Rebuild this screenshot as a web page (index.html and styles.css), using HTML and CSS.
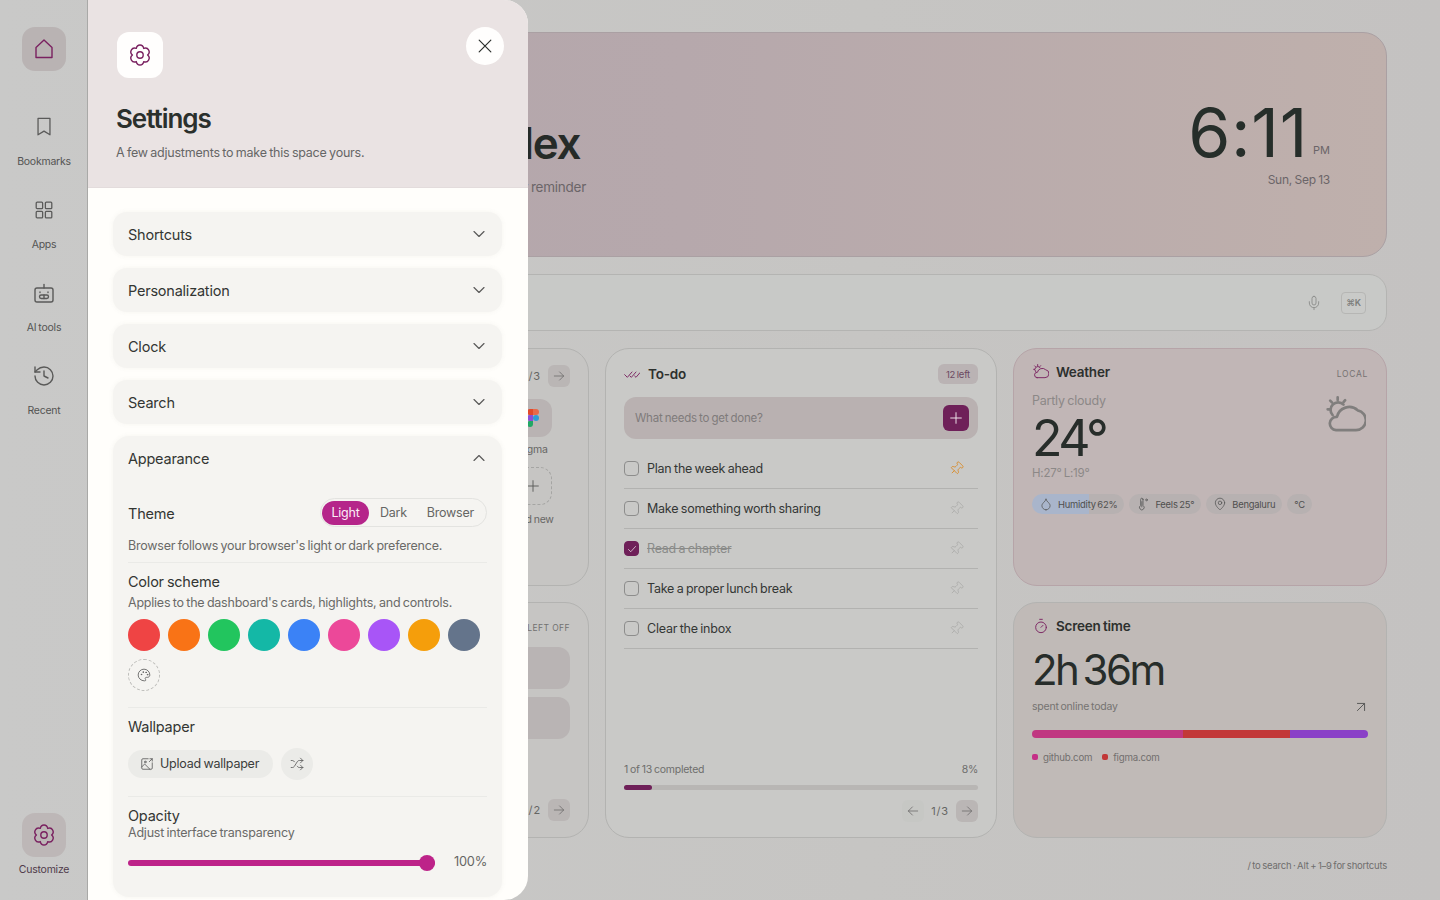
FILE: index.html
```html
<!DOCTYPE html>
<html lang="en">
<head>
<meta charset="utf-8">
<title>Dashboard settings</title>
<link rel="stylesheet" href="styles.css">
</head>
<body>
<svg class="defs" aria-hidden="true">
  <symbol id="i-home" viewBox="0 0 24 24"><path d="M4 20.500V10.500L12 3l8 7.500v10z"/></symbol>
  <symbol id="i-gear" viewBox="0 0 24 24"><circle cx="12" cy="12" r="3.200"/><path d="M19.600 12c1.900-1.600 1.900-3.600 1-5.100-.9-1.600-2.800-2.400-4.900-1.500C15.300 3.300 13.800 2 12 2S8.700 3.300 8.300 5.400C6.200 4.500 4.300 5.300 3.400 6.900c-.9 1.500-.9 3.500 1 5.100-1.900 1.600-1.900 3.600-1 5.100.9 1.600 2.800 2.400 4.900 1.500.4 2.100 1.900 3.400 3.700 3.400s3.300-1.300 3.700-3.400c2.100.9 4 .1 4.900-1.500.9-1.500.9-3.500-1-5.100z"/></symbol>
  <symbol id="i-bookmark" viewBox="0 0 24 24"><path d="m18.500 20.500-6.500-4-6.500 4V2.500h13z"/></symbol>
  <symbol id="i-grid" viewBox="0 0 24 24"><rect x="3.500" y="3.500" width="7" height="7" rx="1"/><rect x="13.500" y="3.500" width="7" height="7" rx="1"/><rect x="3.500" y="13.500" width="7" height="7" rx="1"/><rect x="13.500" y="13.500" width="7" height="7" rx="1"/></symbol>
  <symbol id="i-bot" viewBox="0 0 24 24"><path d="M12 7V3.500"/><rect x="3" y="7" width="18" height="14" rx="2"/><rect x="7.500" y="14" width="9" height="3.500" rx="1.750"/><path d="M8 11v.5M16 11v.5M12 14v3.500"/></symbol>
  <symbol id="i-history" viewBox="0 0 24 24"><path d="M3 12a9 9 0 1 0 9-9 9.750 9.750 0 0 0-6.740 2.740L3 8"/><path d="M3 3v5h5"/><path d="M12 7v5l4 2"/></symbol>
  <symbol id="i-x" viewBox="0 0 24 24"><path d="M5 5l14 14M19 5 5 19"/></symbol>
  <symbol id="i-down" viewBox="0 0 24 24"><path d="m6 9 6 6 6-6"/></symbol>
  <symbol id="i-up" viewBox="0 0 24 24"><path d="m6 15 6-6 6 6"/></symbol>
  <symbol id="i-palette" viewBox="0 0 24 24"><path d="M12 22a10 10 0 1 1 10-10c0 2.200-1.800 4-4 4h-2a2 2 0 0 0-1.500 3.300c.4.5.5 1 .5 1.500 0 .7-.6 1.200-1.300 1.200z"/><circle cx="7.500" cy="11" r=".6"/><circle cx="10.500" cy="7" r=".6"/><circle cx="15.500" cy="7.500" r=".6"/><circle cx="18" cy="11.500" r=".6"/></symbol>
  <symbol id="i-image" viewBox="0 0 24 24"><path d="M14 3H5a2 2 0 0 0-2 2v14a2 2 0 0 0 2 2h14a2 2 0 0 0 2-2v-9"/><path d="m3 17 5-5 9 9"/><circle cx="9" cy="8.500" r="1.500"/><path d="m16 8 5-5M17 3h4v4"/></symbol>
  <symbol id="i-shuffle" viewBox="0 0 24 24"><path d="m18 14 4 4-4 4"/><path d="m18 2 4 4-4 4"/><path d="M2 18h2a4 4 0 0 0 3.300-1.700l5.400-8.600A4 4 0 0 1 16 6h6"/><path d="M2 6h2a4 4 0 0 1 3.600 2.200"/><path d="M22 18h-6a4 4 0 0 1-3.300-1.800l-.4-.45"/></symbol>
  <symbol id="i-pin" viewBox="0 0 24 24"><path d="M12 17v5"/><path d="M9 10.760a2 2 0 0 1-1.110 1.790l-1.780.9A2 2 0 0 0 5 15.240V16a1 1 0 0 0 1 1h12a1 1 0 0 0 1-1v-.76a2 2 0 0 0-1.110-1.790l-1.780-.9A2 2 0 0 1 15 10.760V7a1 1 0 0 1 1-1 2 2 0 0 0 0-4H8a2 2 0 0 0 0 4 1 1 0 0 1 1 1z"/></symbol>
  <symbol id="i-todo" viewBox="0 0 24 24"><path d="m1 13 4 4 7-8"/><path d="m9 15 2 2 7-8"/><path d="m16 15 2 2 6-7"/></symbol>
  <symbol id="i-cloud" viewBox="0 0 24 24"><path d="M6 20.500H18A6 6 0 0 0 19 8.600 7.500 7.500 0 0 0 6.600 12.500 4 4 0 0 0 6 20.500Z"/><path d="M10.500 5.200A4.500 4.500 0 0 0 4 11.500"/><path d="M7 .8v1.600M1 8h1.500M2.500 2.800l1.200 1.200M11.500 2.500l-1 1.200"/></symbol>
  <symbol id="i-drop" viewBox="0 0 24 24"><path d="M12 22a7 7 0 0 0 7-7c0-2-1-3.900-3-5.500s-3.500-4-4-6.500c-.5 2.500-2 4.900-4 6.500C6 11.100 5 13 5 15a7 7 0 0 0 7 7z"/></symbol>
  <symbol id="i-thermo" viewBox="0 0 24 24"><path d="M12 4v10.540a4 4 0 1 1-4 0V4a2 2 0 0 1 4 0Z"/><path d="M10 8v9"/><circle cx="18" cy="5" r="1.500"/></symbol>
  <symbol id="i-mappin" viewBox="0 0 24 24"><path d="M20 10c0 6-8 12-8 12s-8-6-8-12a8 8 0 0 1 16 0Z"/><circle cx="12" cy="10" r="3"/></symbol>
  <symbol id="i-timer" viewBox="0 0 24 24"><path d="M10 2h4"/><path d="m12 14 3-3"/><circle cx="12" cy="14" r="8"/></symbol>
  <symbol id="i-upright" viewBox="5 5 14 14"><path d="M7 7h10v10"/><path d="M7 17 17 7"/></symbol>
  <symbol id="i-mic" viewBox="0 0 24 24"><path d="M12 2a3 3 0 0 0-3 3v7a3 3 0 0 0 6 0V5a3 3 0 0 0-3-3Z"/><path d="M19 10v2a7 7 0 0 1-14 0v-2"/><path d="M12 19v3"/></symbol>
  <symbol id="i-right" viewBox="0 0 24 24"><path d="M4 12h16"/><path d="m13 5 7 7-7 7"/></symbol>
  <symbol id="i-left" viewBox="0 0 24 24"><path d="M20 12H4"/><path d="m11 5-7 7 7 7"/></symbol>
  <symbol id="i-plus" viewBox="0 0 24 24"><path d="M12 4v16M4 12h16"/></symbol>
  <symbol id="i-check" viewBox="0 0 24 24"><path d="m5 13 4.500 4.500L19 7"/></symbol>
</svg>

<div class="app">
  <nav class="side">
    <div class="nav-home"><span class="nav-box active"><svg class="ic ic24 accent"><use href="#i-home"/></svg></span></div>
    <div class="nav-item"><span class="nav-box"><svg class="ic ic22"><use href="#i-bookmark"/></svg></span><span class="nav-label">Bookmarks</span></div>
    <div class="nav-item"><span class="nav-box"><svg class="ic ic22"><use href="#i-grid"/></svg></span><span class="nav-label">Apps</span></div>
    <div class="nav-item"><span class="nav-box"><svg class="ic ic24"><use href="#i-bot"/></svg></span><span class="nav-label">AI tools</span></div>
    <div class="nav-item"><span class="nav-box"><svg class="ic ic24"><use href="#i-history"/></svg></span><span class="nav-label">Recent</span></div>
    <div class="nav-item nav-bottom"><span class="nav-box active"><svg class="ic ic24 accent"><use href="#i-gear"/></svg></span><span class="nav-label accent-label">Customize</span></div>
  </nav>

  <main class="main">
    <section class="hero">
      <div class="hero-left">
        <h1 class="greet">Hi, Alex</h1>
        <p class="hero-sub">No events today, so add a calendar reminder</p>
      </div>
      <div class="clock">
        <div class="clock-line"><span class="clock-time">6:11</span><span class="clock-pm">PM</span></div>
        <div class="clock-date">Sun, Sep 13</div>
      </div>
    </section>

    <section class="search">
      <svg class="ic ic16 faint"><use href="#i-mic"/></svg>
      <span class="kbd">⌘K</span>
    </section>

    <section class="grid">
      <article class="card card-apps">
        <div class="pager-top"><span class="pager-num">1/3</span><span class="pg-btn"><svg class="ic ic14"><use href="#i-right"/></svg></span></div>
        <div class="tile-col">
          <span class="tile">
            <svg class="figma" viewBox="0 0 12 18"><path fill="#e2492b" d="M3 0h3v6H3a3 3 0 0 1 0-6z"/><path fill="#e8694a" d="M6 0h3a3 3 0 0 1 0 6H6z"/><path fill="#8a4fd8" d="M3 6h3v6H3a3 3 0 0 1 0-6z"/><circle fill="#2f9bd6" cx="9" cy="9" r="3"/><path fill="#21a865" d="M3 12h3v3a3 3 0 1 1-3-3z"/></svg>
          </span>
          <span class="tile-label">Figma</span>
          <span class="tile tile-add"><svg class="ic ic16"><use href="#i-plus"/></svg></span>
          <span class="tile-label">Add new</span>
        </div>
      </article>

      <article class="card card-todo">
        <header class="todo-head">
          <svg class="ic ic16 accent"><use href="#i-todo"/></svg>
          <h2 class="card-title">To-do</h2>
          <span class="left-badge">12 left</span>
        </header>
        <div class="todo-input">
          <span class="placeholder">What needs to get done?</span>
          <span class="add-btn"><svg class="ic ic16 white"><use href="#i-plus"/></svg></span>
        </div>
        <ul class="todo-list">
          <li class="todo-row"><span class="cb"></span><span class="todo-text">Plan the week ahead</span><svg class="ic pin pin-on"><use href="#i-pin"/></svg></li>
          <li class="todo-row"><span class="cb"></span><span class="todo-text">Make something worth sharing</span><svg class="ic pin"><use href="#i-pin"/></svg></li>
          <li class="todo-row"><span class="cb cb-on"><svg class="ic ic12 white"><use href="#i-check"/></svg></span><span class="todo-text done">Read a chapter</span><svg class="ic pin"><use href="#i-pin"/></svg></li>
          <li class="todo-row"><span class="cb"></span><span class="todo-text">Take a proper lunch break</span><svg class="ic pin"><use href="#i-pin"/></svg></li>
          <li class="todo-row"><span class="cb"></span><span class="todo-text">Clear the inbox</span><svg class="ic pin"><use href="#i-pin"/></svg></li>
        </ul>
        <div class="todo-foot">
          <div class="todo-stats"><span>1 of 13 completed</span><span>8%</span></div>
          <div class="todo-bar"><span class="todo-fill"></span></div>
          <div class="todo-pager">
            <span class="pg-btn pg-off"><svg class="ic ic14"><use href="#i-left"/></svg></span>
            <span class="pager-num">1/3</span>
            <span class="pg-btn"><svg class="ic ic14"><use href="#i-right"/></svg></span>
          </div>
        </div>
      </article>

      <article class="card card-weather">
        <header class="w-head">
          <svg class="ic ic16 accent"><use href="#i-cloud"/></svg>
          <h2 class="card-title">Weather</h2>
          <span class="local">LOCAL</span>
        </header>
        <div class="w-body">
          <div class="w-main">
            <div class="w-cond">Partly cloudy</div>
            <div class="w-temp">24°</div>
            <div class="w-hl">H:27° L:19°</div>
          </div>
          <svg class="ic w-big"><use href="#i-cloud"/></svg>
        </div>
        <div class="chips">
          <span class="chip chip-hum"><svg class="ic ic14"><use href="#i-drop"/></svg>Humidity 62%</span>
          <span class="chip"><svg class="ic ic14"><use href="#i-thermo"/></svg>Feels 25°</span>
          <span class="chip"><svg class="ic ic14"><use href="#i-mappin"/></svg>Bengaluru</span>
          <span class="chip chip-unit">°C</span>
        </div>
      </article>

      <article class="card card-left">
        <div class="left-head">LEFT OFF</div>
        <div class="left-tile"></div>
        <div class="left-tile"></div>
        <div class="pager-bottom"><span class="pager-num">1/2</span><span class="pg-btn"><svg class="ic ic14"><use href="#i-right"/></svg></span></div>
      </article>

      <article class="card card-screen">
        <header class="w-head">
          <svg class="ic ic16 accent"><use href="#i-timer"/></svg>
          <h2 class="card-title">Screen time</h2>
        </header>
        <div class="st-value">2h 36m</div>
        <div class="st-sub"><span>spent online today</span><svg class="ic ic10"><use href="#i-upright"/></svg></div>
        <div class="st-bar"><span class="seg seg-a"></span><span class="seg seg-b"></span><span class="seg seg-c"></span></div>
        <div class="legend">
          <span class="leg"><i class="dot dot-a"></i>github.com</span>
          <span class="leg"><i class="dot dot-b"></i>figma.com</span>
        </div>
      </article>
    </section>

    <footer class="hint">/ to search · Alt + 1–9 for shortcuts</footer>
  </main>
</div>

<aside class="drawer">
  <header class="d-head">
    <span class="d-logo"><svg class="ic ic24 accent"><use href="#i-gear"/></svg></span>
    <h2 class="d-title">Settings</h2>
    <p class="d-sub">A few adjustments to make this space yours.</p>
    <button class="d-close" type="button" aria-label="Close"><svg class="ic ic20 dark"><use href="#i-x"/></svg></button>
  </header>
  <div class="d-body">
    <div class="acc"><span>Shortcuts</span><svg class="ic ic20"><use href="#i-down"/></svg></div>
    <div class="acc"><span>Personalization</span><svg class="ic ic20"><use href="#i-down"/></svg></div>
    <div class="acc"><span>Clock</span><svg class="ic ic20"><use href="#i-down"/></svg></div>
    <div class="acc"><span>Search</span><svg class="ic ic20"><use href="#i-down"/></svg></div>
    <div class="acc-open">
      <div class="acc acc-flat"><span>Appearance</span><svg class="ic ic20"><use href="#i-up"/></svg></div>
      <div class="theme-row">
        <span class="set-title theme-title">Theme</span>
        <div class="seg-ctl"><span class="seg-opt seg-on">Light</span><span class="seg-opt">Dark</span><span class="seg-opt">Browser</span></div>
      </div>
      <p class="set-note">Browser follows your browser's light or dark preference.</p>
      <div class="set-block set-color">
        <div class="set-title">Color scheme</div>
        <p class="set-desc">Applies to the dashboard's cards, highlights, and controls.</p>
        <div class="swatches">
          <span class="sw s1"></span><span class="sw s2"></span><span class="sw s3"></span><span class="sw s4"></span><span class="sw s5"></span><span class="sw s6"></span><span class="sw s7"></span><span class="sw s8"></span><span class="sw s9"></span>
          <span class="sw sw-custom"><svg class="ic ic14"><use href="#i-palette"/></svg></span>
        </div>
      </div>
      <div class="set-block set-wall">
        <div class="set-title">Wallpaper</div>
        <div class="wall-row">
          <span class="upload"><svg class="ic ic14"><use href="#i-image"/></svg><span>Upload wallpaper</span></span>
          <span class="shuffle"><svg class="ic ic14"><use href="#i-shuffle"/></svg></span>
        </div>
      </div>
      <div class="set-block set-op">
        <div class="set-title">Opacity</div>
        <p class="set-desc">Adjust interface transparency</p>
        <div class="slider-row">
          <div class="slider"><span class="thumb"></span></div>
          <span class="slider-val">100%</span>
        </div>
      </div>
    </div>
  </div>
</aside>
</body>
</html>
```

FILE: styles.css
```css
* { box-sizing: border-box; }
html, body { margin: 0; height: 100%; }
body {
  width: 1440px; height: 900px; overflow: hidden; position: relative;
  font-family: Inter, "Liberation Sans", sans-serif;
  color: #2a2e2b;
  background: linear-gradient(90deg, #c9c9c8 0%, #c6c5c3 60%, #c4c2c1 100%);
  letter-spacing: -0.014em;
  word-spacing: -0.05em;
}
h1, h2, p, ul { margin: 0; padding: 0; }
ul { list-style: none; }
.defs { position: absolute; width: 0; height: 0; }
.ic { fill: none; stroke: #5a5a59; stroke-width: 1.400; stroke-linecap: round; stroke-linejoin: round; flex: none; display: block; }
.ic10 { width: 10px; height: 10px; }
.ic12 { width: 12px; height: 12px; }
.ic14 { width: 14px; height: 14px; }
.ic16 { width: 16px; height: 16px; }
.ic20 { width: 20px; height: 20px; }
.ic22 { width: 22px; height: 22px; }
.ic24 { width: 24px; height: 24px; }
.accent { stroke: #7a2160; }
.white { stroke: #f4ecf1; }
.dark { stroke: #2a2e2b; }
.faint { stroke: #8d8e8c; }

.app { display: flex; height: 900px; }
.side { width: 88px; flex: none; display: flex; flex-direction: column; align-items: center; padding: 27px 0 22px; gap: 18px; }
.nav-home { margin-bottom: 16px; }
.nav-item { display: flex; flex-direction: column; align-items: center; gap: 5px; }
.nav-bottom { margin-top: auto; }
.nav-box { width: 44px; height: 44px; border-radius: 13px; display: flex; align-items: center; justify-content: center; }
.nav-box.active { background: #b9b3b3; }
.nav-bottom .nav-box.active { background: #bdb7b7; }
.nav-label { font-size: 10.500px; line-height: 16px; color: #545453; }
.accent-label { color: #4f3a4a; }

.main { flex: 1; min-width: 0; padding: 32px 53px 0 127px; display: flex; flex-direction: column; }
.hero {
  height: 225px; border-radius: 24px; border: 1px solid #aaa0a3;
  background: linear-gradient(90deg, #b3a6ab 0%, #b6a8ac 40%, #bfb0ac 100%);
  display: flex; justify-content: space-between; padding: 0 56px 0 100px;
}
.hero-left { padding-top: 83px; text-align: right; }
.greet { font-size: 44px; font-weight: 600; line-height: 54px; letter-spacing: -0.03em; word-spacing: 0; white-space: nowrap; color: #262b28; padding-right: 6px; }
.hero-sub { font-size: 13.500px; line-height: 20px; margin-top: 7px; color: #6b6568; white-space: nowrap; }
.clock { display: flex; flex-direction: column; align-items: flex-end; padding-top: 59px; }
.clock-line { display: flex; align-items: flex-end; gap: 5px; }
.clock-time { font-size: 68px; line-height: 80px; font-weight: 400; color: #262e2a; letter-spacing: .01em; }
.clock-pm { font-size: 11px; line-height: 16px; margin-bottom: 14px; color: #6b6568; letter-spacing: 0; }
.clock-date { font-size: 12px; line-height: 16px; margin-top: 0; color: #6b6568; }

.search {
  height: 57px; margin-top: 17px; border-radius: 18px; border: 1px solid #b4b4b2;
  background: #c8c9c7; display: flex; align-items: center; justify-content: flex-end; gap: 19px; padding: 0 20px;
}
.kbd { width: 25px; height: 22px; border: 1px solid #b6b6b4; border-radius: 4px; font-size: 9px; font-weight: 600; color: #7d7e7c; display: flex; align-items: center; justify-content: center; background: #c9cac8; }

.grid { margin-top: 17px; display: grid; grid-template-columns: 374px 392px 374px; grid-template-rows: 238px 236px; gap: 16px; }
.card { border-radius: 24px; border: 1px solid #b3b3b1; min-width: 0; }
.card-apps { grid-column: 1; grid-row: 1; background: #c6c5c3; padding: 16px 18px; }
.card-todo { grid-column: 2; grid-row: 1 / span 2; background: #c9c9c7; padding: 14px 18px 15px; display: flex; flex-direction: column; }
.card-weather { grid-column: 3; grid-row: 1; background: #c1b6b6; border-color: #b6a4a8; padding: 13px 18px; }
.card-left { grid-column: 1; grid-row: 2; background: #c6c5c3; padding: 17px 18px 16px; display: flex; flex-direction: column; gap: 8px; }
.card-screen { grid-column: 3; grid-row: 2; background: #c0bab7; padding: 13px 18px; }

.pg-btn { width: 22px; height: 22px; border-radius: 6px; background: #bab6b5; display: flex; align-items: center; justify-content: center; }
.pg-off { background: #c6c7c4; }
.pg-off .ic { stroke: #a9aaa8; }
.pg-btn .ic { stroke: #6e6c6c; }
.pager-num { font-size: 11px; color: #656563; letter-spacing: .08em; }
.pager-top, .pager-bottom { display: flex; justify-content: flex-end; align-items: center; gap: 7px; }
.pager-bottom { margin-top: auto; }
.tile-col { width: 38px; margin: 12px 0 0 280px; display: flex; flex-direction: column; align-items: center; }
.tile { width: 38px; height: 38px; flex: none; border-radius: 12px; background: #b9b3b3; display: flex; align-items: center; justify-content: center; }
.tile-add { background: none; border: 1px dashed #a5a5a3; margin-top: 9px; }
.figma { width: 12px; height: 18px; display: block; }
.tile-label { font-size: 10.500px; line-height: 16px; margin-top: 5px; color: #666664; white-space: nowrap; }
.tile-add + .tile-label { margin-top: 7px; }
.left-head { text-align: right; font-size: 8.500px; line-height: 16px; letter-spacing: .05em; word-spacing: 0; color: #717170; margin-bottom: 3px; }
.left-tile { height: 42px; border-radius: 12px; background: #b9b4b4; flex: none; }

.todo-head { display: flex; align-items: center; height: 22px; gap: 8px; }
.card-title { font-size: 13.500px; font-weight: 600; line-height: 20px; color: #2d302e; }
.left-badge { margin-left: auto; height: 20px; padding: 0 8px; border-radius: 6px; background: #bab3b4; color: #6c4a62; font-size: 9.500px; display: flex; align-items: center; }
.todo-input { margin-top: 12px; height: 42px; flex: none; border-radius: 12px; background: #b9b1b1; display: flex; align-items: center; justify-content: space-between; padding: 0 9px 0 11px; }
.placeholder { font-size: 11.500px; color: #7f7b7b; }
.add-btn { width: 26px; height: 26px; border-radius: 6px; background: #6f2059; display: flex; align-items: center; justify-content: center; }
.todo-list { margin-top: 10px; }
.todo-row { height: 40px; border-bottom: 1px solid #b2b2b0; display: flex; align-items: center; }
.cb { width: 15px; height: 15px; border-radius: 4px; border: 1px solid #8d8d8c; flex: none; display: flex; align-items: center; justify-content: center; }
.cb-on { background: #6f2059; border-color: #6f2059; }
.todo-text { font-size: 12.500px; margin-left: 8px; color: #343735; flex: 1; white-space: nowrap; }
.done { text-decoration: line-through; color: #8a8b89; }
.pin { width: 15px; height: 15px; transform: rotate(45deg); margin-right: 14px; stroke: #aeaeac; }
.pin-on { stroke: #d98d2c; }
.todo-foot { margin-top: auto; }
.todo-stats { display: flex; justify-content: space-between; font-size: 10.500px; line-height: 14px; color: #6e6e6c; }
.todo-bar { height: 5px; border-radius: 3px; background: #b8b6b4; margin-top: 8px; }
.todo-fill { display: block; width: 28px; height: 5px; border-radius: 3px; background: #6f2059; }
.todo-pager { display: flex; justify-content: flex-end; align-items: center; gap: 7px; margin-top: 10px; }

.w-head { display: flex; align-items: center; height: 20px; gap: 7px; padding: 0 0 0 1px; }
.local { margin-left: auto; padding-top: 3px; font-size: 8.500px; letter-spacing: .08em; color: #767272; }
.w-body { display: flex; justify-content: space-between; }
.w-cond { font-size: 12.500px; line-height: 18px; margin-top: 10px; color: #8c8887; }
.w-temp { font-size: 50px; line-height: 54px; margin-top: 1px; color: #272d2a; font-weight: 400; letter-spacing: -0.07em; }
.w-hl { font-size: 11.500px; line-height: 16px; color: #8c8887; }
.w-big { width: 40px; height: 40px; margin: 14px 2px 0 0; stroke: #807e7d; stroke-width: 1.600; }
.chips { display: flex; gap: 5px; margin-top: 13px; }
.chip { height: 20px; border-radius: 10px; background: #b7b1b1; font-size: 9.400px; color: #4f4f4e; display: flex; align-items: center; gap: 5px; padding: 0 7px; white-space: nowrap; }
.chip-hum { background: linear-gradient(90deg, #a9b5cb 0 62%, #b7b1b1 62%); }
.chip-unit { padding: 0 7px; }

.st-value { font-size: 42px; line-height: 52px; margin-top: 8px; color: #272d2a; font-weight: 400; letter-spacing: -0.06em; word-spacing: -0.1em; }
.st-sub { display: flex; justify-content: space-between; align-items: center; font-size: 10.500px; line-height: 14px; margin-top: 4px; color: #757371; padding-right: 2px; }
.st-bar { display: flex; height: 8px; border-radius: 4px; overflow: hidden; margin-top: 16px; }
.seg { display: block; height: 8px; }
.seg-a { width: 151px; background: #c03781; }
.seg-b { width: 107px; background: #c23838; }
.seg-c { flex: 1; background: #8a40c7; }
.legend { display: flex; gap: 10px; margin-top: 14px; }
.leg { display: flex; align-items: center; gap: 5px; font-size: 9.700px; color: #726f6e; }
.dot { width: 6px; height: 6px; border-radius: 2px; display: block; margin-top: -2px; }
.dot-a { background: #c52f87; }
.dot-b { background: #c23838; }
.hint { text-align: right; font-size: 9.500px; line-height: 14px; margin-top: 21px; color: #6f6e6d; }

/* settings drawer, over the dashboard */
.drawer {
  position: absolute; left: 88px; top: 0; width: 440px; height: 900px; overflow: hidden;
  background: #fffefb; border-radius: 0 24px 24px 0; box-shadow: -1px 0 0 #a9a9a7;
}
.d-head { position: relative; height: 188px; background: #eae3e3; border-bottom: 1px solid #e3dcdc; padding: 32px 28px 0; }
.d-logo { width: 46px; height: 46px; margin-left: 1px; border-radius: 12px; background: #fffefd; display: flex; align-items: center; justify-content: center; }
.d-title { font-size: 26px; font-weight: 600; line-height: 32px; margin-top: 25px; letter-spacing: -0.04em; word-spacing: 0; color: #2b302d; }
.d-sub { font-size: 12.500px; line-height: 18px; margin-top: 9px; color: #666; }
.d-close { position: absolute; right: 24px; top: 27px; width: 38px; height: 38px; border: 0; border-radius: 50%; background: #fffefd; padding: 0; display: flex; align-items: center; justify-content: center; }
.d-body { padding: 24px 26px 0 25px; display: flex; flex-direction: column; gap: 12px; }
.acc { height: 44px; border-radius: 14px; background: #f5f4f1; box-shadow: 0 0 5px rgba(110,110,100,.07); display: flex; align-items: center; justify-content: space-between; padding: 0 13px 0 15px; font-size: 14.500px; color: #333633; flex: none; }
.acc-flat { box-shadow: none; background: none; }
.acc-open { border-radius: 16px; background: #f5f4f1; box-shadow: 0 0 5px rgba(110,110,100,.07); padding-bottom: 24px; }
.theme-row { display: flex; align-items: center; justify-content: space-between; padding: 18px 15px 0; }
.theme-title { padding-top: 2px; }
.set-title { font-size: 14.500px; line-height: 20px; color: #333633; }
.seg-ctl { height: 29px; width: 167px; border: 1px solid #e3e3e0; border-radius: 15px; display: flex; align-items: center; padding: 0 2px 0 1px; }
.seg-opt { font-size: 12.500px; color: #666664; line-height: 24px; padding: 0 10px; }
.seg-on { width: 48px; padding: 0; margin-right: 1px; text-align: center; height: 24px; border-radius: 12px; background: #b5258a; color: #fbeef6; }
.set-note { font-size: 12.500px; line-height: 18px; margin: 10px 15px 0; color: #6a6a68; padding-bottom: 7px; border-bottom: 1px solid #eaeae7; }
.set-desc { font-size: 12.500px; line-height: 18px; color: #6a6a68; }
.set-block { margin: 0 15px; }
.set-color { padding-top: 9px; }
.set-color .set-desc { margin-top: 2px; }
.swatches { display: flex; flex-wrap: wrap; gap: 8px; margin-top: 7px; padding-bottom: 16px; border-bottom: 1px solid #eaeae7; }
.sw { width: 32px; height: 32px; border-radius: 50%; display: flex; align-items: center; justify-content: center; flex: none; }
.s1 { background: #ef4444; } .s2 { background: #f97316; } .s3 { background: #22c55e; }
.s4 { background: #14b8a6; } .s5 { background: #3b82f6; } .s6 { background: #ec4899; }
.s7 { background: #a855f7; } .s8 { background: #f59e0b; } .s9 { background: #64748b; }
.sw-custom { border: 1px dashed #bdbdba; }
.set-wall { padding-top: 9px; padding-bottom: 16px; border-bottom: 1px solid #eaeae7; }
.wall-row { display: flex; align-items: center; gap: 8px; margin-top: 11px; }
.upload { height: 28px; width: 145px; border-radius: 14px; background: #ebebe8; display: flex; align-items: center; gap: 6px; padding: 0 12px 1px; font-size: 12.500px; color: #3b3d3b; white-space: nowrap; }
.shuffle { width: 32px; height: 32px; border-radius: 50%; background: #ebebe8; display: flex; align-items: center; justify-content: center; }
.set-op { padding-top: 9px; }
.set-op .set-desc { line-height: 16px; margin-top: -1px; }
.slider-row { display: flex; align-items: center; justify-content: space-between; margin-top: 12px; height: 20px; }
.slider { position: relative; width: 307px; height: 6px; border-radius: 3px; background: #bd2389; }
.thumb { position: absolute; right: 0; top: -5px; width: 16px; height: 16px; border-radius: 50%; background: #bd2389; }
.slider-val { font-size: 12.800px; line-height: 16px; padding-bottom: 2px; color: #666664; }
```
